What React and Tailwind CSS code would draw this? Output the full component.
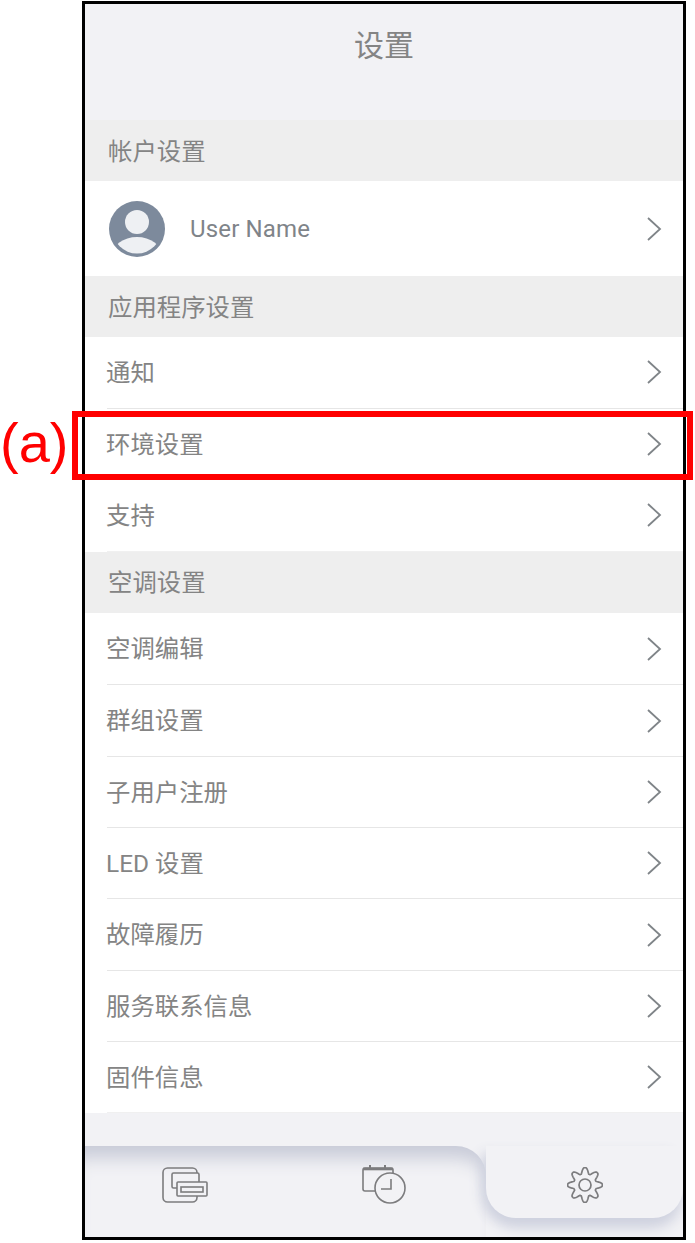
import React from 'react';

const font = "font-['Roboto','Noto_Sans_CJK_SC',sans-serif]";

const Chevron = () => (
  <svg width="16" height="26" viewBox="0 0 16 26" fill="none" className="shrink-0">
    <path d="M2 2 L14 13 L2 24" stroke="#7f8488" strokeWidth="1.8" />
  </svg>
);

const Avatar = () => (
  <svg width="56" height="56" viewBox="0 0 56 56">
    <defs>
      <clipPath id="avatarClip"><circle cx="28" cy="28" r="24.5" /></clipPath>
    </defs>
    <circle cx="28" cy="28" r="28" fill="#7d8a9c" />
    <circle cx="28" cy="21" r="12" fill="#eef0f3" />
    <g clipPath="url(#avatarClip)">
      <ellipse cx="28" cy="55" rx="25" ry="19" fill="#eef0f3" />
    </g>
  </svg>
);

const DevicesIcon = () => (
  <svg width="46" height="38" viewBox="0 0 46 38" fill="none" stroke="#7c7c7e" strokeWidth="1.6">
    <rect x="1" y="2" width="34" height="34" rx="4.5" />
    <rect x="10" y="7" width="27" height="15" rx="1.5" fill="#f2f2f5" />
    <rect x="15" y="16" width="30" height="14" rx="1" fill="#f2f2f5" />
    <rect x="19" y="21" width="22" height="5" />
  </svg>
);

const ScheduleIcon = () => (
  <svg width="46" height="42" viewBox="0 0 46 42" fill="none" stroke="#7c7c7e" strokeWidth="1.6">
    <path d="M18 27 H3 a2 2 0 0 1 -2 -2 V6 a2 2 0 0 1 2 -2 H29 a2 2 0 0 1 2 2 V9" />
    <path d="M1 5 H31" strokeWidth="2.6" />
    <path d="M8 1 V5 M23 1 V5" strokeWidth="2" />
    <circle cx="28" cy="24" r="15" fill="#f2f2f5" />
    <path d="M29 15 V25 H19" />
  </svg>
);

// wavy eight tooth outline
const gearPath = () => {
  const pts = [];
  for (let i = 0; i < 240; i++) {
    const t = (i / 240) * Math.PI * 2 + Math.PI / 8;
    const wave = Math.max(-1, Math.min(1, Math.cos(8 * t) * 1.15));
    const r = 14.4 + 2.9 * wave;
    pts.push(`${(18 + r * Math.cos(t)).toFixed(2)} ${(18 + r * Math.sin(t)).toFixed(2)}`);
  }
  return `M${pts.join(' L')} Z`;
};

const GearIcon = () => (
  <svg width="36" height="36" viewBox="0 0 36 36" fill="none" stroke="#7c7c7e" strokeWidth="1.7">
    <path d={gearPath()} strokeLinejoin="round" />
    <circle cx="18" cy="18" r="6" />
  </svg>
);

const SectionTitle = ({ children }) => (
  <div className="h-[61px] shrink-0 bg-[#eeeeee] flex items-center pl-[23px] pt-[3px] text-[24.4px] text-[#848484]">{children}</div>
);

const Row = ({ label, last, height }) => (
  <div className={`${height} shrink-0 bg-white pl-[22px]`}>
    <div className={`h-full flex items-center justify-between pr-[21px] text-[24.4px] text-[#848484] ${last ? 'border-b border-[#f0f0f0]' : 'border-b border-[#e6e6e6]'}`}>
      <span className="pt-[2px] -ml-px">{label}</span>
      <Chevron />
    </div>
  </div>
);

const App = () => {
  return (
    <div className={`relative h-[1243px] w-[695px] bg-white ${font}`}>
      <div className="absolute left-0 top-[412px] h-[62px] flex items-center text-[56px] leading-none text-[#ff0000] font-['Liberation_Sans',sans-serif]">(a)</div>
      <div className="absolute left-[72px] top-[411px] h-[69px] w-[621px] border-[6px] border-[#ff0000] z-10" />

      <div className="absolute left-[82px] top-[1px] h-[1239px] w-[604px] border-[3px] border-black flex flex-col bg-white">
        <div className="h-[116px] shrink-0 bg-[#f2f2f5] flex justify-center pt-[22px] text-[30px] leading-[40px] text-[#848484]">设置</div>

        <SectionTitle>帐户设置</SectionTitle>
        <div className="h-[95px] shrink-0 bg-white flex items-center justify-between pl-[24px] pr-[21px]">
          <div className="flex items-center gap-[25px]">
            <Avatar />
            <span className="text-[24px] text-[#7f8489] tracking-[0.15px]">User Name</span>
          </div>
          <Chevron />
        </div>

        <SectionTitle>应用程序设置</SectionTitle>
        <Row label="通知" height="h-[71.6px]" />
        <Row label="环境设置" height="h-[71.6px]" />
        <Row label="支持" last height="h-[71.6px]" />

        <SectionTitle>空调设置</SectionTitle>
        <Row label="空调编辑" height="h-[72.7px]" />
        <Row label="群组设置" height="h-[71.3px]" />
        <Row label="子用户注册" height="h-[71.3px]" />
        <Row label="LED 设置" height="h-[71.3px]" />
        <Row label="故障履历" height="h-[71.3px]" />
        <Row label="服务联系信息" height="h-[71.3px]" />
        <Row label="固件信息" last height="h-[71.3px]" />

        <div className="flex-1 bg-[#f2f2f5] pt-[33px] flex overflow-hidden">
          <div className="w-[401px] h-full flex rounded-tr-[30px] shadow-[inset_0_24px_18px_-12px_#c8cbd8]">
            <div className="w-[200px] flex justify-center pt-[20px]"><DevicesIcon /></div>
            <div className="w-[200px] flex justify-center pt-[18px]"><ScheduleIcon /></div>
          </div>
          <div className="flex-1 h-[72px] bg-[#f2f2f5] rounded-b-[30px] flex justify-center pt-[21px] shadow-[0_12px_14px_-2px_#cfd2df,-8px_4px_14px_-4px_#cfd2df]">
            <GearIcon />
          </div>
        </div>
      </div>
    </div>
  );
};

export default App;
